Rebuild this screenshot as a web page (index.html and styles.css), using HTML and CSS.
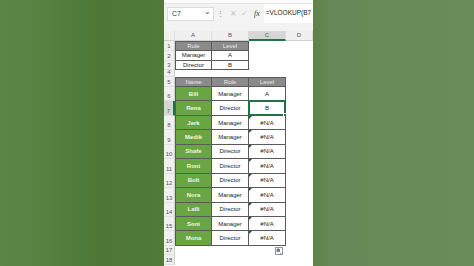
FILE: index.html
```html
<!doctype html>
<html lang="en">
<head>
	<meta charset="UTF-8" />
	<title>VLOOKUP</title>
	<link rel="stylesheet" href="styles.css">
</head>
<body>
	<div class="frame">
		<div class="side side-left"></div>

		<div class="excel">
			<!--顶部-->
			<div class="topstrip"></div>
			<div class="fbar">
				<div class="namebox">C7<span class="chev">&#8964;</span></div>
				<span class="dots">&#8942;</span>
				<span class="ico x">&#10005;</span>
				<span class="ico ok">&#10003;</span>
				<span class="fx">fx</span>
				<div class="formula">=VLOOKUP(B7</div>
			</div>
			<div class="gap"></div>

			<!--表格-->
			<div class="sheet">
				<div class="hd corner"></div>
				<div class="hd">A</div>
				<div class="hd">B</div>
				<div class="hd hd-sel">C</div>
				<div class="hd">D</div>

				<div class="rn">1</div>
				<div class="c th bl bt">Role</div>
				<div class="c th bt">Level</div>
				<div class="c"></div><div class="c"></div>

				<div class="rn">2</div>
				<div class="c bd bl">Manager</div>
				<div class="c bd">A</div>
				<div class="c"></div><div class="c"></div>

				<div class="rn">3</div>
				<div class="c bd bl">Director</div>
				<div class="c bd">B</div>
				<div class="c"></div><div class="c"></div>

				<div class="rn">4</div>
				<div class="c"></div><div class="c"></div><div class="c"></div><div class="c"></div>

				<div class="rn">5</div>
				<div class="c th bl bt">Name</div>
				<div class="c th bt">Role</div>
				<div class="c th bt">Level</div>
				<div class="c"></div>

				<div class="rn">6</div>
				<div class="c nm bl">Bill</div>
				<div class="c bd">Manager</div>
				<div class="c bd">A</div>
				<div class="c"></div>

				<div class="rn rn-sel">7</div>
				<div class="c nm bl">Rena</div>
				<div class="c bd">Director</div>
				<div class="c bd sel">B<i class="handle"></i></div>
				<div class="c"></div>

				<div class="rn">8</div>
				<div class="c nm bl">Jerk</div>
				<div class="c bd">Manager</div>
				<div class="c bd err">#N/A</div>
				<div class="c"></div>

				<div class="rn">9</div>
				<div class="c nm bl">Medik</div>
				<div class="c bd">Manager</div>
				<div class="c bd err">#N/A</div>
				<div class="c"></div>

				<div class="rn">10</div>
				<div class="c nm bl">Shafe</div>
				<div class="c bd">Director</div>
				<div class="c bd err">#N/A</div>
				<div class="c"></div>

				<div class="rn">11</div>
				<div class="c nm bl">Roni</div>
				<div class="c bd">Director</div>
				<div class="c bd err">#N/A</div>
				<div class="c"></div>

				<div class="rn">12</div>
				<div class="c nm bl">Bolt</div>
				<div class="c bd">Director</div>
				<div class="c bd err">#N/A</div>
				<div class="c"></div>

				<div class="rn">13</div>
				<div class="c nm bl">Nora</div>
				<div class="c bd">Manager</div>
				<div class="c bd err">#N/A</div>
				<div class="c"></div>

				<div class="rn">14</div>
				<div class="c nm bl">Lalli</div>
				<div class="c bd">Director</div>
				<div class="c bd err">#N/A</div>
				<div class="c"></div>

				<div class="rn">15</div>
				<div class="c nm bl">Soni</div>
				<div class="c bd">Manager</div>
				<div class="c bd err">#N/A</div>
				<div class="c"></div>

				<div class="rn">16</div>
				<div class="c nm bl">Mona</div>
				<div class="c bd">Director</div>
				<div class="c bd err">#N/A</div>
				<div class="c"></div>

				<div class="rn">17</div>
				<div class="c"></div><div class="c"></div>
				<div class="c paste-cell">
					<svg class="paste" width="8" height="8" viewBox="0 0 8 8">
						<rect x="0.5" y="0.5" width="7" height="7" fill="#fff" stroke="#9a9a9a"/>
						<rect x="1.5" y="2" width="3.5" height="3" fill="#6b7fa8"/>
						<rect x="2.5" y="1.5" width="1.5" height="1" fill="#555"/>
						<path d="M5 6 L6.5 6 L5.75 7 Z" fill="#444"/>
					</svg>
				</div>
				<div class="c"></div>

				<div class="rn">18</div>
				<div class="c"></div><div class="c"></div><div class="c"></div><div class="c"></div>
			</div>
		</div>

		<div class="side side-right"></div>
	</div>
</body>
</html>
```

FILE: styles.css
```css
*{
	padding: 0;
	margin: 0;
	box-sizing: border-box;
}
body{
	width: 474px;
	height: 266px;
	overflow: hidden;
	font-family: "Liberation Sans", Arial, sans-serif;
}

.frame{
	display: flex;
	height: 266px;
}
/*两边绿色*/
.side-left{
	width: 164px;
	background: linear-gradient(90deg, #5c8548 0%, #55803f 30%, #4e7736 60%, #507a3a 100%);
}
.side-right{
	flex: 1;
	background: linear-gradient(90deg, #5e8249 0%, #67895a 12%, #688a57 60%, #6a8c58 100%);
}

/*excel 区域*/
.excel{
	width: 149px;
	background: #fff;
	display: flex;
	flex-direction: column;
	overflow: hidden;
}
.topstrip{
	height: 4px;
	background: #fbfbfb;
	border-bottom: 1px solid #e4e4e4;
}
.fbar{
	height: 19px;
	background: #f3f3f3;
	display: flex;
	align-items: center;
	padding-left: 3px;
	white-space: nowrap;
}
.namebox{
	width: 47px;
	height: 14px;
	flex-shrink: 0;
	background: #fff;
	border: 1px solid #dcdcdc;
	font-size: 7px;
	line-height: 12px;
	padding-left: 4px;
	color: #333;
	position: relative;
}
.chev{
	position: absolute;
	right: 2px;
	top: -2px;
	font-size: 8px;
	color: #555;
}
.dots{
	font-size: 7px;
	color: #888;
	margin-left: 3px;
}
.ico{
	font-size: 8px;
	color: #c4c4c4;
	margin-left: 4px;
}
.ico.x{
	margin-left: 6px;
}
.fx{
	font-family: "Liberation Serif", serif;
	font-style: italic;
	font-size: 8px;
	color: #444;
	margin-left: 6px;
}
.formula{
	flex: 1;
	height: 19px;
	background: #fff;
	margin-left: 4px;
	font-size: 6.5px;
	line-height: 18px;
	padding-left: 2px;
	color: #222;
	overflow: hidden;
}
.gap{
	height: 8px;
	background: #f3f3f3;
}

/*表格*/
.sheet{
	display: grid;
	grid-template-columns: 11px 37px 37px 37px 27px;
	grid-template-rows: 10px 10px 9.5px 9.5px 7px 10px repeat(11, 14.45px) 9px 10px;
	font-size: 6px;
	color: #222;
}
.hd{
	background: #f0f0f0;
	border-right: 1px solid #dadada;
	border-bottom: 1px solid #d0d0d0;
	text-align: center;
	font-size: 6px;
	line-height: 9px;
	color: #555;
}
.hd-sel{
	background: #d6d6d6;
	border-bottom: 2px solid #217346;
	color: #217346;
}
.rn{
	background: #f0f0f0;
	border-right: 1px solid #d0d0d0;
	border-bottom: 1px solid #e0e0e0;
	font-size: 6px;
	color: #555;
	display: flex;
	align-items: flex-end;
	justify-content: center;
	padding-bottom: 1px;
}
.rn-sel{
	background: #d6d6d6;
	border-right: 2px solid #217346;
	color: #217346;
}
.c{
	display: flex;
	align-items: center;
	justify-content: center;
	position: relative;
	white-space: nowrap;
}
.bd, .th, .nm{
	border-right: 1px solid #5a5a5a;
	border-bottom: 1px solid #5a5a5a;
}
.bl{
	border-left: 1px solid #5a5a5a;
}
.bt{
	border-top: 1px solid #5a5a5a;
}
.th{
	background: #8b8b8b;
	color: #eaeaea;
}
.nm{
	background: #6aa543;
	color: #eef6e8;
	font-weight: bold;
}

/*选中单元格*/
.sel{
	border: 2px solid #217346;
	margin: -1px 0 0 -1px;
}
.handle{
	position: absolute;
	right: -3px;
	bottom: -3px;
	width: 4px;
	height: 4px;
	background: #217346;
	border: 1px solid #fff;
}

/*错误小三角*/
.err::before{
	content: "";
	position: absolute;
	left: 0;
	top: 0;
	border-top: 3px solid #1e5a2e;
	border-right: 3px solid transparent;
}

.paste-cell{
	justify-content: flex-end;
	align-items: flex-start;
	padding: 1px 3px 0 0;
}
```
